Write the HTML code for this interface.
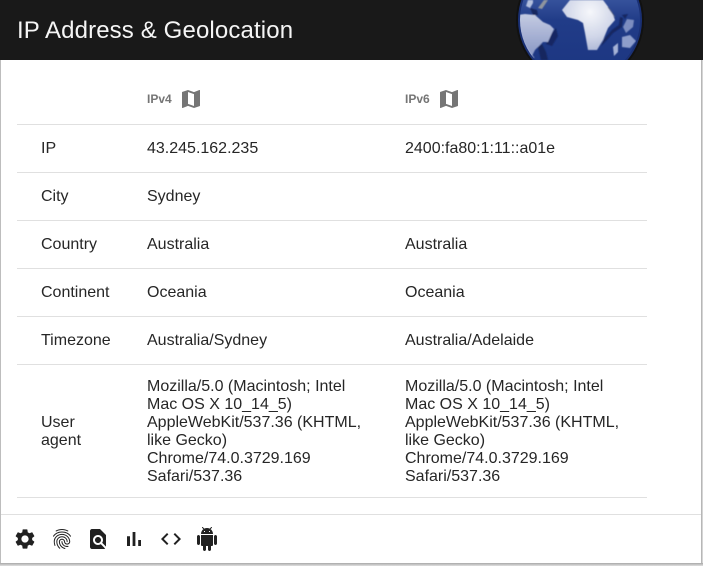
<!DOCTYPE html>
<html><head><meta charset="utf-8">
<style>
*{box-sizing:border-box}
html,body{margin:0;padding:0;width:703px;height:566px;overflow:hidden;background:#bdbdbd;font-family:"Liberation Sans",sans-serif}
#panel{position:absolute;left:1px;top:0;width:700px;height:563px;background:#fff}
#edge{position:absolute;left:701px;top:60px;width:2px;height:506px;background:linear-gradient(90deg,#a8a8a8,#e4e4e4)}
#bot{position:absolute;left:0;top:563px;width:703px;height:3px;background:linear-gradient(180deg,#a8a8a8,#e0e0e0)}
#head{position:absolute;left:0;top:0;width:703px;height:60px;background:#191919;overflow:hidden}
#title{position:absolute;left:17px;top:17px;color:#f5f5f5;font-size:24px;letter-spacing:.13px;line-height:28px;white-space:nowrap}
.l{position:absolute;left:17px;width:630px;height:1px;background:#e0e0e0}
.t{position:absolute;font-size:16px;line-height:18px;color:#262626;white-space:nowrap}
.h{position:absolute;font-size:12px;line-height:14px;font-weight:bold;color:#757575}
svg.i{position:absolute;width:24px;height:24px}
</style></head><body>
<div id="panel"></div><div id="edge"></div><div id="bot"></div>
<div id="head">
<svg style="position:absolute;left:500px;top:0" width="170" height="60" viewBox="500 0 170 60">
<defs>
<linearGradient id="g" x1="0" y1="0" x2="0" y2="1"><stop offset="0" stop-color="#2f4c9c"/><stop offset="0.3" stop-color="#3a569f"/><stop offset="0.5" stop-color="#213c88"/><stop offset="1" stop-color="#1b3580"/></linearGradient>
<radialGradient id="a" gradientUnits="userSpaceOnUse" cx="590" cy="12" r="42"><stop offset="0" stop-color="#f6f7fb"/><stop offset=".6" stop-color="#d0d6e8"/><stop offset="1" stop-color="#a7b2d4"/></radialGradient>
<linearGradient id="s" x1="0" y1="0" x2="0" y2="1"><stop offset="0" stop-color="#c4cbe2"/><stop offset="1" stop-color="#8493c2"/></linearGradient>
<clipPath id="c"><circle cx="580" cy="20" r="60"/></clipPath>
<filter id="b" x="-5%" y="-5%" width="110%" height="110%"><feGaussianBlur stdDeviation=".45"/></filter>
</defs>
<circle cx="580" cy="20" r="64" fill="#000" opacity=".3"/>
<circle cx="580" cy="20" r="62" fill="#1a3074"/>
<circle cx="580" cy="20" r="60" fill="url(#g)"/>
<g clip-path="url(#c)" filter="url(#b)">
<path d="M552 33L556 28L558 36L552 46L546 44Z" fill="#142763"/>
<path d="M538 47L542 44L546 52L548 60L541 60Z" fill="#14255e"/>
<path d="M518 15L525 14L535 15L543 22L550 25L554 29L552 33L548 42L543 42L538 47L535 50L530 60L524 60L518 40Z" fill="url(#s)"/>
<path d="M530 8L537 10L538 15L533 15Z" fill="#14255e"/>
<path d="M538 8L544 0L548 0L542 9Z" fill="#8f949e"/>
<path d="M528 0L533 0L533 3L530 8L526 6Z" fill="#b4c0de"/>
<path d="M570 0L603 0L612 12L615 20L608 28L603 40L597 50L588 50L585 33L583 23L578 20L567 17L562 10Z" fill="url(#a)"/>
<path d="M608 7L615 17" stroke="#566080" stroke-width=".9" fill="none"/>
<path d="M620 17L623 18L622 27L613 33L606 41L601 46L604 39L612 30L619 25Z" fill="#122560"/>
<path d="M627 19L634 20L633 27L626 33L623 27Z" fill="#7b8dc0"/>
<path d="M622 37L630 35L636 41L630 48L622 47Z" fill="#8e9ecb"/>
<path d="M613 47L618 43L618 52L614 56Z" fill="#a5b2d6"/>
<path d="M622 15L628 14L625 19Z" fill="#122560"/>
<path d="M522 38Q527 50 534 58" stroke="#aab6d8" stroke-width="1.5" fill="none" opacity=".6"/>
</g>
</svg>
<div id="title">IP Address &amp; Geolocation</div>
</div>

<div class="h" style="left:147px;top:92px">IPv4</div>
<svg class="i" style="left:179px;top:87px" viewBox="0 0 24 24"><path fill="#757575" d="M20.5 3l-.16.03L15 5.1 9 3 3.36 4.9c-.21.07-.36.25-.36.48V20.5c0 .28.22.5.5.5l.16-.03L9 18.9l6 2.1 5.64-1.9c.21-.07.36-.25.36-.48V3.5c0-.28-.22-.5-.5-.5zM15 19l-6-2.11V5l6 2.11V19z"/></svg>
<div class="h" style="left:405px;top:92px">IPv6</div>
<svg class="i" style="left:437px;top:87px" viewBox="0 0 24 24"><path fill="#757575" d="M20.5 3l-.16.03L15 5.1 9 3 3.36 4.9c-.21.07-.36.25-.36.48V20.5c0 .28.22.5.5.5l.16-.03L9 18.9l6 2.1 5.64-1.9c.21-.07.36-.25.36-.48V3.5c0-.28-.22-.5-.5-.5zM15 19l-6-2.11V5l6 2.11V19z"/></svg>

<div class="l" style="top:124px"></div>
<div class="l" style="top:172px"></div>
<div class="l" style="top:220px"></div>
<div class="l" style="top:268px"></div>
<div class="l" style="top:316px"></div>
<div class="l" style="top:364px"></div>
<div class="l" style="top:497px"></div>
<div class="l" style="top:514px;left:1px;width:700px"></div>

<div class="t" style="left:41px;top:140px">IP</div>
<div class="t" style="left:147px;top:140px">43.245.162.235</div>
<div class="t" style="left:405px;top:140px">2400:fa80:1:11::a01e</div>
<div class="t" style="left:41px;top:188px">City</div>
<div class="t" style="left:147px;top:188px">Sydney</div>
<div class="t" style="left:41px;top:236px">Country</div>
<div class="t" style="left:147px;top:236px">Australia</div>
<div class="t" style="left:405px;top:236px">Australia</div>
<div class="t" style="left:41px;top:284px">Continent</div>
<div class="t" style="left:147px;top:284px">Oceania</div>
<div class="t" style="left:405px;top:284px">Oceania</div>
<div class="t" style="left:41px;top:332px">Timezone</div>
<div class="t" style="left:147px;top:332px">Australia/Sydney</div>
<div class="t" style="left:405px;top:332px">Australia/Adelaide</div>
<div class="t" style="left:41px;top:414px">User<br>agent</div>
<div class="t" style="left:147px;top:378px">Mozilla/5.0 (Macintosh; Intel<br>Mac OS X 10_14_5)<br>AppleWebKit/537.36 (KHTML,<br>like Gecko)<br>Chrome/74.0.3729.169<br>Safari/537.36</div>
<div class="t" style="left:405px;top:378px">Mozilla/5.0 (Macintosh; Intel<br>Mac OS X 10_14_5)<br>AppleWebKit/537.36 (KHTML,<br>like Gecko)<br>Chrome/74.0.3729.169<br>Safari/537.36</div>

<svg class="i" style="left:13px;top:527px" viewBox="0 0 24 24"><path fill="#212121" d="M19.14 12.94c.04-.3.06-.61.06-.94 0-.32-.02-.64-.07-.94l2.03-1.58c.18-.14.23-.41.12-.61l-1.92-3.32c-.12-.22-.37-.29-.59-.22l-2.39.96c-.5-.38-1.03-.7-1.62-.94l-.36-2.54c-.04-.24-.24-.41-.48-.41h-3.84c-.24 0-.43.17-.47.41l-.36 2.54c-.59.24-1.13.57-1.62.94l-2.39-.96c-.22-.08-.47 0-.59.22L2.74 8.87c-.12.21-.08.47.12.61l2.03 1.58c-.05.3-.09.63-.09.94s.02.64.07.94l-2.03 1.58c-.18.14-.23.41-.12.61l1.92 3.32c.12.22.37.29.59.22l2.39-.96c.5.38 1.03.7 1.62.94l.36 2.54c.05.24.24.41.48.41h3.84c.24 0 .44-.17.47-.41l.36-2.54c.59-.24 1.13-.56 1.62-.94l2.39.96c.22.08.47 0 .59-.22l1.92-3.32c.12-.22.07-.47-.12-.61l-2.01-1.58zM12 15.6c-1.98 0-3.6-1.62-3.6-3.6s1.62-3.6 3.6-3.6 3.6 1.62 3.6 3.6-1.62 3.6-3.6 3.6z"/></svg>
<svg class="i" style="left:50px;top:527px" viewBox="0 0 24 24"><path fill="#212121" d="M17.81 4.47c-.08 0-.16-.02-.23-.06C15.66 3.42 14 3 12.01 3c-1.98 0-3.86.47-5.57 1.41-.24.13-.54.04-.68-.2-.13-.24-.04-.55.2-.68C7.82 2.52 9.86 2 12.01 2c2.13 0 3.99.47 6.03 1.52.25.13.34.43.21.67-.09.18-.26.28-.44.28zM3.5 9.72c-.1 0-.2-.03-.29-.09-.23-.16-.28-.47-.12-.7.99-1.4 2.25-2.5 3.75-3.27C9.98 4.04 14 4.03 17.15 5.65c1.5.77 2.76 1.86 3.75 3.25.16.22.11.54-.12.7-.23.16-.54.11-.7-.12-.9-1.26-2.04-2.25-3.39-2.94-2.87-1.47-6.54-1.47-9.4.01-1.36.7-2.5 1.7-3.4 2.96-.08.14-.23.21-.39.21zm6.25 12.07c-.13 0-.26-.05-.35-.15-.87-.87-1.34-1.43-2.01-2.64-.69-1.23-1.05-2.73-1.05-4.34 0-2.97 2.54-5.39 5.66-5.39s5.66 2.42 5.66 5.39c0 .28-.22.5-.5.5s-.5-.22-.5-.5c0-2.42-2.09-4.39-4.66-4.39-2.57 0-4.66 1.97-4.66 4.39 0 1.44.32 2.77.93 3.85.64 1.15 1.08 1.64 1.85 2.42.19.2.19.51 0 .71-.11.1-.24.15-.37.15zm7.17-1.85c-1.19 0-2.24-.3-3.1-.89-1.49-1.01-2.38-2.65-2.38-4.39 0-.28.22-.5.5-.5s.5.22.5.5c0 1.41.72 2.74 1.94 3.56.71.48 1.54.71 2.54.71.24 0 .64-.03 1.04-.1.27-.05.53.13.58.41.05.27-.13.53-.41.58-.57.11-1.07.12-1.21.12zM14.91 22c-.04 0-.09-.01-.13-.02-1.59-.44-2.63-1.03-3.72-2.1-1.4-1.39-2.17-3.24-2.17-5.22 0-1.62 1.38-2.94 3.08-2.94 1.7 0 3.08 1.32 3.08 2.94 0 1.07.93 1.94 2.08 1.94s2.08-.87 2.08-1.94c0-3.77-3.25-6.83-7.25-6.83-2.84 0-5.44 1.58-6.61 4.03-.39.81-.59 1.76-.59 2.8 0 .78.07 2.01.67 3.61.1.26-.03.55-.29.64-.26.1-.55-.04-.64-.29-.49-1.31-.73-2.61-.73-3.96 0-1.2.23-2.29.68-3.24 1.33-2.79 4.28-4.6 7.51-4.6 4.55 0 8.25 3.51 8.25 7.83 0 1.62-1.38 2.94-3.08 2.94s-3.08-1.32-3.08-2.94c0-1.07-.93-1.94-2.08-1.94s-2.08.87-2.08 1.94c0 1.71.66 3.31 1.87 4.51.95.94 1.86 1.46 3.27 1.85.27.07.42.35.35.61-.05.23-.26.38-.47.38z"/></svg>
<svg class="i" style="left:86px;top:527px" viewBox="0 0 24 24"><path fill="#212121" d="M20 19.59V8l-6-6H6c-1.1 0-1.99.9-1.99 2L4 20c0 1.1.89 2 1.99 2H18c.45 0 .85-.15 1.19-.4l-4.43-4.43c-.8.52-1.74.83-2.76.83-2.76 0-5-2.24-5-5s2.24-5 5-5 5 2.24 5 5c0 1.02-.31 1.96-.83 2.75L20 19.59zM9 13c0 1.66 1.34 3 3 3s3-1.34 3-3-1.34-3-3-3-3 1.34-3 3z"/></svg>
<svg class="i" style="left:122px;top:527px" viewBox="0 0 24 24"><path fill="#212121" d="M5 9.2h3V19H5zM10.6 5h2.8v14h-2.8zm5.6 8H19v6h-2.8z"/></svg>
<svg class="i" style="left:159px;top:527px" viewBox="0 0 24 24"><path fill="#212121" d="M9.4 16.6L4.8 12l4.6-4.6L8 6l-6 6 6 6 1.4-1.4zm5.2 0l4.6-4.6-4.6-4.6L16 6l6 6-6 6-1.4-1.4z"/></svg>
<svg class="i" style="left:195px;top:527px" viewBox="0 0 24 24"><path fill="#212121" d="M6 18c0 .55.45 1 1 1h1v3.5c0 .83.67 1.5 1.5 1.5s1.5-.67 1.5-1.5V19h2v3.5c0 .83.67 1.5 1.5 1.5s1.5-.67 1.5-1.5V19h1c.55 0 1-.45 1-1V8H6v10zM3.5 8C2.67 8 2 8.67 2 9.5v7c0 .83.67 1.5 1.5 1.5S5 17.33 5 16.5v-7C5 8.67 4.33 8 3.5 8zm17 0c-.83 0-1.5.67-1.5 1.5v7c0 .83.67 1.5 1.5 1.5s1.5-.67 1.5-1.5v-7c0-.83-.67-1.5-1.5-1.5zm-4.97-5.84l1.3-1.3c.2-.2.2-.51 0-.71-.2-.2-.51-.2-.71 0l-1.48 1.48C13.85 1.23 12.95 1 12 1c-.96 0-1.86.23-2.66.63L7.85.15c-.2-.2-.51-.2-.71 0-.2.2-.2.51 0 .71l1.31 1.31C6.97 3.26 6 5.01 6 7h12c0-1.99-.97-3.75-2.47-4.84zM10 5H9V4h1v1zm5 0h-1V4h1v1z"/></svg>
</body></html>
